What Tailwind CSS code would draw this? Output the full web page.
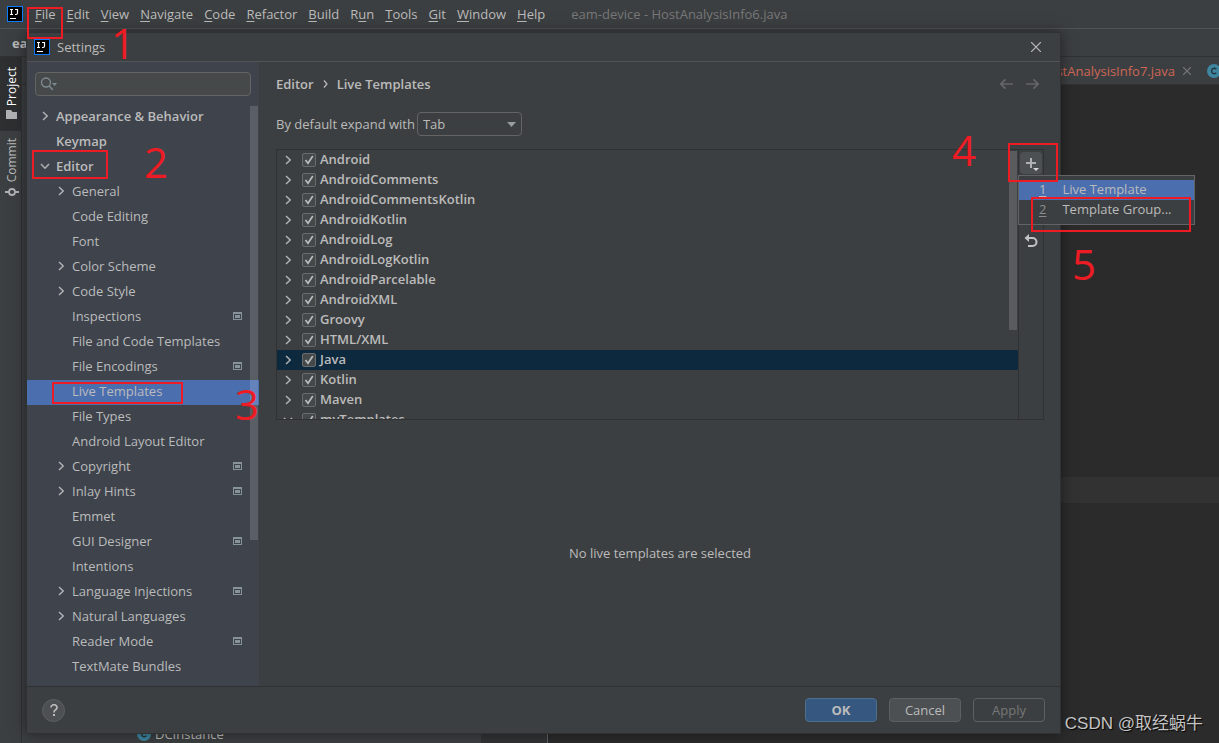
<!DOCTYPE html>
<html lang="en">
<head>
<meta charset="utf-8">
<title>Settings</title>
<script src="https://cdn.jsdelivr.net/npm/@tailwindcss/browser@4"></script>
</head>
<body class="relative flex h-screen flex-col overflow-hidden bg-[#3c3f41] font-['Open_Sans','Noto_Sans_CJK_SC',sans-serif] text-[13px] leading-5 text-[#bbbbbb]">

<svg class="hidden">
  <symbol id="logo" viewBox="0 0 16 16"><rect width="16" height="16" fill="#087cfa"/><rect x="1" y="1" width="14" height="14" fill="#000"/><path d="M3 3.5h3M4.5 3.500v5M3 8.500h3M8 3.500h2.500v3.500q0 1.500-1.500 1.500H8" fill="none" stroke="#fff" stroke-width="1.200"/><rect x="3" y="12" width="6" height="1" fill="#fff"/></symbol>
  <symbol id="right" viewBox="0 0 16 16"><path d="M6 4l4.200 4L6 12" fill="none" stroke="#afb1b3" stroke-width="1.500"/></symbol>
  <symbol id="down" viewBox="0 0 16 16"><path d="M4 6l4 4.200L12 6" fill="none" stroke="#afb1b3" stroke-width="1.500"/></symbol>
  <symbol id="scope" viewBox="0 0 9 8"><path d="M0 0h9v8H0z" fill="#87939a"/><path d="M1 2h7v5H1z" fill="#3e434c"/><path d="M2 3h5v3H2z" fill="#87939a"/></symbol>
  <symbol id="class" viewBox="0 0 14 14"><circle cx="7" cy="7" r="7" fill="#3e86a0"/><path d="M9.300 5.200A2.700 2.700 0 1 0 9.300 8.800" fill="none" stroke="#25353c" stroke-width="1.400"/></symbol>
</svg>

<header class="flex h-[29px] shrink-0 items-center border-b border-[#515355] pl-[7px]">
  <svg class="mr-3 size-4"><use href="#logo"/></svg>
  <nav class="flex gap-[11px]" aria-label="Main menu">
    <button><u class="underline-offset-2">F</u>ile</button>
    <button><u class="underline-offset-2">E</u>dit</button>
    <button><u class="underline-offset-2">V</u>iew</button>
    <button><u class="underline-offset-2">N</u>avigate</button>
    <button><u class="underline-offset-2">C</u>ode</button>
    <button><u class="underline-offset-2">R</u>efactor</button>
    <button><u class="underline-offset-2">B</u>uild</button>
    <button>R<u class="underline-offset-2">u</u>n</button>
    <button><u class="underline-offset-2">T</u>ools</button>
    <button><u class="underline-offset-2">G</u>it</button>
    <button><u class="underline-offset-2">W</u>indow</button>
    <button><u class="underline-offset-2">H</u>elp</button>
  </nav>
  <span class="ml-[26px] text-[#787878]">eam-device - HostAnalysisInfo6.java</span>
</header>
<div class="flex h-7 shrink-0 items-center border-b border-[#2f3133] pl-3 font-bold">eam-device</div>

<div class="flex min-h-0 flex-1">
  <aside class="flex w-[22px] shrink-0 flex-col border-r border-[#2f3133]">
    <button class="flex h-[74px] flex-col items-center justify-end gap-1 bg-[#2d2f30] pb-3 pl-[2px] text-xs text-white">
      <span class="rotate-180 [writing-mode:vertical-rl]">Project</span>
      <svg class="h-[9px] w-[11px]" viewBox="0 0 11 9"><path d="M0 0h5l1.500 2H11v7H0z" fill="#afb1b3"/></svg>
    </button>
    <button class="flex h-[71px] flex-col items-center justify-end gap-1 pb-1 pl-[2px] text-xs">
      <span class="rotate-180 [writing-mode:vertical-rl]">Commit</span>
      <svg class="h-3 w-[14px]" viewBox="0 0 14 12" fill="none" stroke="#afb1b3" stroke-width="1.800"><circle cx="7" cy="6" r="3"/><path d="M0 6h4M10 6h4"/></svg>
    </button>
  </aside>
  <section class="flex w-[459px] shrink-0 flex-col justify-between">
    <div class="h-7 border-b border-[#323232]"></div>
    <div class="flex h-[18px] items-center gap-1 pl-[115px]"><svg class="size-[14px]"><use href="#class"/></svg>DCInstance</div>
  </section>
  <main class="flex min-w-0 flex-1 flex-col bg-[#2b2b2b]">
    <div class="flex h-7 shrink-0 items-center justify-end gap-2 overflow-hidden border-b border-[#323232] bg-[#3c3f41]">
      <span class="text-[#cf6655]">HostAnalysisInfo7.java</span>
      <button aria-label="Close tab"><svg class="size-2" viewBox="0 0 8 8"><path d="M0 0l8 8M8 0L0 8" stroke="#77797b" stroke-width="1.200"/></svg></button>
      <svg class="-mr-[2px] ml-2 size-[14px] shrink-0"><use href="#class"/></svg>
    </div>
    <div class="flex flex-1">
      <div class="w-[67px] border-r border-[#606060] bg-[#313335]"></div>
      <div class="flex-1 pt-[392px]"><div class="h-[26px] bg-[#323232]"></div></div>
    </div>
  </main>
</div>

<!-- Settings dialog -->
<div role="dialog" aria-labelledby="dlg-title" class="absolute top-[33px] right-[159px] bottom-[10px] left-[27px] flex flex-col bg-[#3c3f41] shadow-[0_0_14px_rgba(0,0,0,0.5)] outline outline-[#2f3133]">
  <div class="flex h-[29px] shrink-0 items-center border-b border-[#515355] pr-[19px] pl-[7px]">
    <svg class="size-4"><use href="#logo"/></svg>
    <h1 id="dlg-title" class="ml-[7px] flex-1">Settings</h1>
    <button aria-label="Close"><svg class="size-[10px]" viewBox="0 0 10 10"><path d="M0 0l10 10M10 0L0 10" stroke="#bbbbbb" stroke-width="1.200"/></svg></button>
  </div>

  <div class="flex min-h-0 flex-1">
    <div class="flex w-[232px] shrink-0 flex-col bg-[#3e434c]">
      <label class="mx-2 mt-[10px] mb-[9px] flex h-6 shrink-0 items-center rounded-sm border border-[#646464] bg-[#45494a] px-1">
        <svg class="h-4 w-[18px] shrink-0" viewBox="0 0 18 16"><circle cx="6" cy="6.500" r="4.500" fill="none" stroke="#7f8b91" stroke-width="1.300"/><path d="M9.300 10l3.500 4" stroke="#7f8b91" stroke-width="1.500"/><path d="M12 7h5l-2.500 3z" fill="#7f8b91"/></svg>
        <input type="text" aria-label="Search settings" class="min-w-0 flex-1 bg-transparent outline-none">
      </label>
      <div class="relative min-h-0 flex-1">
        <ul id="tree"></ul>
        <div class="absolute top-[1px] right-[1px] h-[434px] w-2 bg-white/15"></div>
      </div>
    </div>

    <div class="flex min-w-0 flex-1 flex-col pr-4 pl-[17px]">
      <div class="mt-3 flex h-5 shrink-0 items-center font-semibold">
        <span>Editor</span>
        <svg class="mx-2 h-2 w-[7px]" viewBox="0 0 7 8"><path d="M2 .5L5 4 2 7.500" fill="none" stroke="#bbbbbb" stroke-width="1.200"/></svg>
        <span class="flex-1">Live Templates</span>
        <button aria-label="Back" class="mr-[13px]"><svg class="h-3 w-[14px]" viewBox="0 0 14 12" fill="none" stroke="#646668" stroke-width="1.700"><path d="M14 6H2M6.500 1.300L1.800 6l4.700 4.700"/></svg></button>
        <button aria-label="Forward" class="mr-1"><svg class="h-3 w-[14px]" viewBox="0 0 14 12" fill="none" stroke="#646668" stroke-width="1.700"><path d="M0 6h12M7.500 1.300L12.200 6l-4.700 4.700"/></svg></button>
      </div>
      <div class="mt-[18px] mb-[13px] flex h-6 shrink-0 items-center gap-[2px]">
        <label for="expand">By default expand with</label>
        <div class="relative">
          <select id="expand" class="h-6 w-[105px] appearance-none rounded-sm border border-[#646464] bg-[#3c3f41] px-[5px] leading-[22px]"><option>Tab</option><option>Enter</option><option>Space</option></select>
          <svg class="pointer-events-none absolute top-[10px] right-[6px] h-[5px] w-[9px]" viewBox="0 0 9 5"><path d="M0 0h9L4.500 5z" fill="#9a9da0"/></svg>
        </div>
      </div>
      <div class="flex h-[271px] shrink-0 border border-[#2f3133]">
        <div class="relative min-w-0 flex-1 overflow-hidden">
          <ul id="groups"></ul>
          <div class="absolute top-[1px] right-[1px] h-[179px] w-2 bg-[#595b5d]"></div>
        </div>
        <div class="flex w-[25px] flex-col items-center border-l border-[#2f3133] pt-[2px]">
          <button aria-label="Add" class="flex size-[22px] items-center justify-center rounded-sm bg-[#4c5052]"><svg class="size-4" viewBox="0 0 16 16"><path d="M8 3v10M3 8h10" stroke="#afb1b3" stroke-width="2"/><path d="M10 13h6l-3 3z" fill="#d5d7d9"/></svg></button>
          <button aria-label="Restore defaults" class="mt-[59px]"><svg class="h-4 w-4" viewBox="0 0 16 16"><path d="M4 5h5.500a4 4 0 0 1 0 8H5" fill="none" stroke="#c0c2c4" stroke-width="2"/><path d="M1.500 5L6 1v8z" fill="#c0c2c4"/></svg></button>
        </div>
      </div>
      <p class="flex flex-1 items-center justify-center">No live templates are selected</p>
    </div>
  </div>

  <footer class="flex h-[47px] shrink-0 items-center gap-3 border-t border-[#2f3133] pr-[15px] pl-[15px]">
    <button aria-label="Help" class="mr-auto flex size-[23px] items-center justify-center rounded-full border border-[#5e6060] bg-[#4c5052]"><svg class="h-3 w-2" viewBox="0 0 8 12"><path d="M1 3.500a3 2.700 0 1 1 4.600 2.200Q4 6.600 4 8.500" fill="none" stroke="#bbbbbb" stroke-width="1.700"/><path d="M3 10h2v2H3z" fill="#bbbbbb"/></svg></button>
    <button class="h-6 w-[72px] rounded-sm border border-[#4c708c] bg-[#365880] font-bold leading-[22px]">OK</button>
    <button class="h-6 w-[72px] rounded-sm border border-[#5e6060] bg-[#4c5052] leading-[22px]">Cancel</button>
    <button disabled class="h-6 w-[72px] rounded-sm border border-[#5e6060] leading-[22px] text-[#777777]">Apply</button>
  </footer>
</div>

<!-- Add popup -->
<div role="menu" class="absolute top-[175px] right-6 w-[177px] border border-[#616365] bg-[#3c3f41] py-1">
  <button role="menuitem" class="flex h-5 w-full items-center gap-4 bg-[#4b6eaf] pb-[2px] pl-5"><u class="underline-offset-2">1</u>Live Template</button>
  <button role="menuitem" class="flex h-5 w-full items-center gap-4 pb-[2px] pl-5"><u class="text-[#8c8c8c] underline-offset-2">2</u>Template Group...</button>
</div>

<!-- Step annotations -->
<div class="pointer-events-none absolute inset-0 text-[42px] leading-10 text-[#ed1c24]">
  <div class="absolute top-[7px] left-[27px] h-8 w-9 border-2 border-[#ed1c24]"></div>
  <div class="absolute top-[150px] left-8 h-[29px] w-19 border-2 border-[#ed1c24]"></div>
  <div class="absolute top-[382px] left-[52px] h-[22px] w-[131px] border-2 border-[#ed1c24]"></div>
  <div class="absolute top-[143px] right-[161px] h-[39px] w-[50px] border-2 border-[#ed1c24]"></div>
  <div class="absolute top-[197px] right-7 h-[35px] w-40 border-2 border-[#ed1c24]"></div>
  <span class="absolute top-[23px] left-[111px]">1</span>
  <span class="absolute top-[142px] left-[144px]">2</span>
  <span class="absolute top-[384px] left-[235px]">3</span>
  <span class="absolute top-[130px] right-[243px]">4</span>
  <span class="absolute top-[244px] right-[123px]">5</span>
</div>

<div class="absolute right-4 bottom-[5px] font-['Liberation_Sans','Noto_Sans_CJK_SC',sans-serif] text-[17px] leading-7 text-[#c4c4c4] [text-shadow:1px_1px_1px_black]">CSDN @取经蜗牛</div>

<script>
  // [label, depth, arrow, has project-scope marker]
  const tree = [
    ['Appearance & Behavior', 0, 'right'], ['Keymap', 0], ['Editor', 0, 'down'],
    ['General', 1, 'right'], ['Code Editing', 1], ['Font', 1], ['Color Scheme', 1, 'right'],
    ['Code Style', 1, 'right'], ['Inspections', 1, '', 1], ['File and Code Templates', 1],
    ['File Encodings', 1, '', 1], ['Live Templates', 1], ['File Types', 1], ['Android Layout Editor', 1],
    ['Copyright', 1, 'right', 1], ['Inlay Hints', 1, 'right', 1], ['Emmet', 1], ['GUI Designer', 1, '', 1],
    ['Intentions', 1], ['Language Injections', 1, 'right', 1], ['Natural Languages', 1, 'right'],
    ['Reader Mode', 1, '', 1], ['TextMate Bundles', 1]
  ];
  document.getElementById('tree').innerHTML = tree.map(([name, depth, arrow, scope]) => `
    <li class="${name === 'Live Templates' ? 'bg-[#4b6eaf]' : ''}"><button class="flex h-[25px] w-full items-center pr-[17px] pb-[3px] text-left ${depth ? 'pl-[26px]' : 'pl-[10px] font-semibold'}">
      <svg class="mr-[3px] size-4 shrink-0">${arrow ? `<use href="#${arrow}"/>` : ''}</svg>
      <span class="flex-1">${name.replace('&', '&amp;')}</span>
      ${scope ? '<svg class="h-2 w-[9px]"><use href="#scope"/></svg>' : ''}
    </button></li>`).join('');

  const groups = ['Android', 'AndroidComments', 'AndroidCommentsKotlin', 'AndroidKotlin', 'AndroidLog', 'AndroidLogKotlin',
    'AndroidParcelable', 'AndroidXML', 'Groovy', 'HTML/XML', 'Java', 'Kotlin', 'Maven', 'myTemplates'];
  document.getElementById('groups').innerHTML = groups.map(name => `
    <li class="flex h-5 items-center pl-[3px] font-semibold ${name === 'Java' ? 'bg-[#0d293e]' : ''}">
      <svg class="mr-[6px] size-4"><use href="#${name === 'myTemplates' ? 'down' : 'right'}"/></svg>
      <label class="flex items-center gap-1"><span class="grid">
        <input type="checkbox" checked class="col-start-1 row-start-1 size-[14px] appearance-none rounded-[2px] border border-[#6b6b6b] bg-[#43494a]">
        <svg class="pointer-events-none col-start-1 row-start-1 size-[14px]" viewBox="0 0 14 14"><path d="M3.500 7l2.500 3.200L10.800 3" fill="none" stroke="#bbbbbb" stroke-width="1.700"/></svg>
      </span><span class="pb-[2px] leading-[18px]">${name}</span></label>
    </li>`).join('');
</script>
</body>
</html>
